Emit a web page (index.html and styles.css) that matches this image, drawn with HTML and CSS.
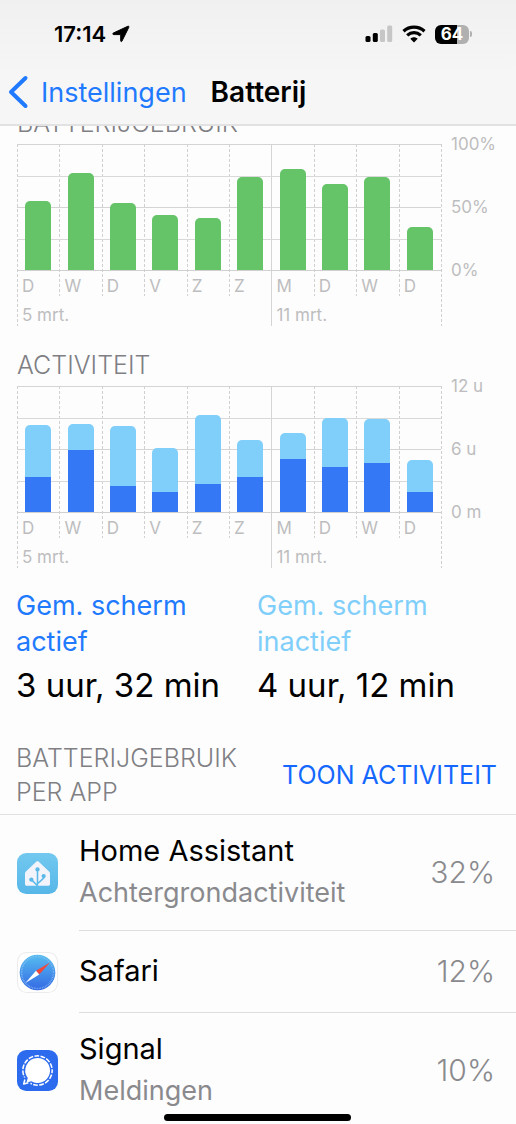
FILE: index.html
```html
<!DOCTYPE html>
<html lang="nl">
<head>
<meta charset="utf-8">
<meta name="viewport" content="width=device-width, initial-scale=1">
<title>Batterij</title>
<link rel="stylesheet" href="styles.css">
</head>
<body>
<header class="top">
  <div class="status">
    <div class="status-left">
      <span class="time">17:14</span>
      <svg class="location" width="18" height="18" viewBox="0 0 18 18" aria-hidden="true"><path d="M1.400 8 15.800 1.300c.8-.4 1.400.2 1 1L10 16c-.4.900-1.300.700-1.300-.3V9.600H1.800c-1.200 0-1.400-1.100-.4-1.600Z" fill="#000" stroke="#000" stroke-width="1"/></svg>
    </div>
    <div class="status-right">
      <svg width="28" height="18" viewBox="0 0 28 18" aria-hidden="true"><rect x="0.500" y="11" width="5" height="6" rx="1.500"/><rect x="7.800" y="8" width="5" height="9" rx="1.500"/><rect x="15" y="4.500" width="5" height="12.500" rx="1.500" fill="#c6c6c6"/><rect x="22.200" y="0.500" width="5" height="16.500" rx="1.500" fill="#c6c6c6"/></svg>
      <svg width="24" height="18" viewBox="0 0 24 18" fill="none" stroke="#000" stroke-width="3.200" aria-hidden="true"><path d="M1.500 6.200c6-5.400 15-5.400 21 0"/><path d="M5.200 10.400c4-3.700 9.600-3.700 13.600 0"/><path d="M8.300 13.800c2.200-2 5.200-2 7.400 0L12 17.400Z" fill="#000" stroke="none"/></svg>
      <div class="battery"><span class="battery-body">64</span><span class="battery-cap"></span></div>
    </div>
  </div>
  <nav class="nav">
    <a class="back" href="#instellingen"><svg width="21" height="34" viewBox="0 0 21 34" fill="none" stroke="#1f7aff" stroke-width="4" stroke-linecap="round" stroke-linejoin="round" aria-hidden="true"><path d="M17.500 3 3 17l14.500 14"/></svg><span>Instellingen</span></a>
    <h1 class="title">Batterij</h1>
  </nav>
</header>
<main class="content">
  <section class="section section-first">
    <h2 class="heading">BATTERIJGEBRUIK</h2>
    <div class="chart">
      <div class="weeks">
        <div class="week week-six">
          <div class="days">
            <div class="day"><div class="track"><div class="bar green" style="height:55%"></div></div><span class="label">D</span></div>
            <div class="day"><div class="track"><div class="bar green" style="height:77%"></div></div><span class="label">W</span></div>
            <div class="day"><div class="track"><div class="bar green" style="height:53%"></div></div><span class="label">D</span></div>
            <div class="day"><div class="track"><div class="bar green" style="height:44%"></div></div><span class="label">V</span></div>
            <div class="day"><div class="track"><div class="bar green" style="height:41%"></div></div><span class="label">Z</span></div>
            <div class="day"><div class="track"><div class="bar green" style="height:74%"></div></div><span class="label">Z</span></div>
          </div>
          <span class="date">5 mrt.</span>
        </div>
        <div class="week week-four">
          <div class="days">
            <div class="day"><div class="track"><div class="bar green" style="height:80%"></div></div><span class="label">M</span></div>
            <div class="day"><div class="track"><div class="bar green" style="height:68%"></div></div><span class="label">D</span></div>
            <div class="day"><div class="track"><div class="bar green" style="height:74%"></div></div><span class="label">W</span></div>
            <div class="day"><div class="track"><div class="bar green" style="height:34%"></div></div><span class="label">D</span></div>
          </div>
          <span class="date">11 mrt.</span>
        </div>
      </div>
      <div class="axis"><span>100%</span><span>50%</span><span>0%</span></div>
    </div>
  </section>

  <section class="section">
    <h2 class="heading">ACTIVITEIT</h2>
    <div class="chart">
      <div class="weeks">
        <div class="week week-six">
          <div class="days">
            <div class="day"><div class="track"><div class="bar sky" style="height:41%"></div><div class="blue" style="height:28%"></div></div><span class="label">D</span></div>
            <div class="day"><div class="track"><div class="bar sky" style="height:21%"></div><div class="blue" style="height:49%"></div></div><span class="label">W</span></div>
            <div class="day"><div class="track"><div class="bar sky" style="height:47%"></div><div class="blue" style="height:21%"></div></div><span class="label">D</span></div>
            <div class="day"><div class="track"><div class="bar sky" style="height:35%"></div><div class="blue" style="height:16%"></div></div><span class="label">V</span></div>
            <div class="day"><div class="track"><div class="bar sky" style="height:55%"></div><div class="blue" style="height:22%"></div></div><span class="label">Z</span></div>
            <div class="day"><div class="track"><div class="bar sky" style="height:29%"></div><div class="blue" style="height:28%"></div></div><span class="label">Z</span></div>
          </div>
          <span class="date">5 mrt.</span>
        </div>
        <div class="week week-four">
          <div class="days">
            <div class="day"><div class="track"><div class="bar sky" style="height:21%"></div><div class="blue" style="height:42%"></div></div><span class="label">M</span></div>
            <div class="day"><div class="track"><div class="bar sky" style="height:39%"></div><div class="blue" style="height:36%"></div></div><span class="label">D</span></div>
            <div class="day"><div class="track"><div class="bar sky" style="height:35%"></div><div class="blue" style="height:39%"></div></div><span class="label">W</span></div>
            <div class="day"><div class="track"><div class="bar sky" style="height:25%"></div><div class="blue" style="height:16%"></div></div><span class="label">D</span></div>
          </div>
          <span class="date">11 mrt.</span>
        </div>
      </div>
      <div class="axis"><span>12 u</span><span>6 u</span><span>0 m</span></div>
    </div>
  </section>

  <dl class="totals">
    <div class="total"><dt class="total-name active">Gem. scherm actief</dt><dd class="total-value">3 uur, 32 min</dd></div>
    <div class="total"><dt class="total-name idle">Gem. scherm inactief</dt><dd class="total-value">4 uur, 12 min</dd></div>
  </dl>

  <div class="apps-head">
    <h2 class="heading apps-title">BATTERIJGEBRUIK PER APP</h2>
    <button class="toggle" type="button">TOON ACTIVITEIT</button>
  </div>
  <ul class="apps">
    <li class="app">
      <svg class="icon" viewBox="0 0 40 40" aria-hidden="true"><defs><linearGradient id="ha" x1="0" y1="0" x2="0" y2="1"><stop offset="0" stop-color="#72c8ef"/><stop offset="1" stop-color="#57b7e8"/></linearGradient></defs><rect width="40" height="40" rx="9" fill="url(#ha)"/><path d="M19 8.400c.6-.6 1.400-.6 2 0l10.300 9.700c.6.600.9 1.300.9 2.100v10c0 1-.8 1.800-1.800 1.800H9.600c-1 0-1.800-.8-1.800-1.800v-10c0-.8.3-1.500.9-2.100Z" fill="#f3f4fb"/><g fill="none" stroke="#5ab9e9" stroke-width="1.500"><path d="M20 16v16M14 26l6 6M26 22.500v2L20 30"/></g><g fill="#5ab9e9"><circle cx="20" cy="16" r="2.100"/><circle cx="14" cy="26" r="2.100"/><circle cx="26" cy="22.500" r="2.100"/></g></svg>
      <div class="app-row"><div class="app-text"><span class="app-name">Home Assistant</span><span class="app-note">Achtergrondactiviteit</span></div><span class="share">32%</span></div>
    </li>
    <li class="app">
      <svg class="icon" viewBox="0 0 40 40" aria-hidden="true"><defs><linearGradient id="sf" x1="0" y1="0" x2="0" y2="1"><stop offset="0" stop-color="#56bdf0"/><stop offset="1" stop-color="#3468e4"/></linearGradient></defs><rect x="0.500" y="0.500" width="39" height="39" rx="9" fill="#fff" stroke="#ececee"/><circle cx="20" cy="20" r="17.400" fill="url(#sf)"/><circle cx="20" cy="20" r="15.600" fill="none" stroke="#8cc3f4" stroke-width="1.600" stroke-dasharray="0.600 1"/><path d="M32.200 10.300 18.500 18.300l3.200 3.600Z" fill="#f0493c"/><path d="M8.200 30.200 18.500 18.300l3.200 3.600Z" fill="#fff"/></svg>
      <div class="app-row"><div class="app-text"><span class="app-name">Safari</span></div><span class="share">12%</span></div>
    </li>
    <li class="app">
      <svg class="icon" viewBox="0 0 40 40" aria-hidden="true"><rect width="40" height="40" rx="9" fill="#2c6bed"/><circle cx="20" cy="20" r="14.300" fill="none" stroke="#fff" stroke-width="1.500" stroke-dasharray="4.600 1.400" stroke-dashoffset="2"/><circle cx="9" cy="31" r="4.500" fill="#2c6bed"/><path d="M20 7.800a12.200 12.200 0 1 1-6 22.800L9.200 31.800l1.300-4.500A12.200 12.200 0 0 1 20 7.800Z" fill="#fff"/><path d="m7.700 28.800-1.200 4.300 4.600-1.100" fill="none" stroke="#fff" stroke-width="1.500" stroke-linejoin="round"/></svg>
      <div class="app-row"><div class="app-text"><span class="app-name">Signal</span><span class="app-note">Meldingen</span></div><span class="share">10%</span></div>
    </li>
  </ul>
</main>
<div class="home-bar"></div>
</body>
</html>
```

FILE: styles.css
```css
* { box-sizing: border-box; }
body {
  margin: 0;
  background: #fdfdfd;
  color: #000;
  font-family: Inter, "Liberation Sans", sans-serif;
}
h1, h2, dl, dd, ul { margin: 0; padding: 0; }

.top {
  position: sticky;
  top: 0;
  z-index: 2;
  height: 126px;
  background: linear-gradient(#f0f0f0, #f6f6f6 60%);
  border-bottom: 2px solid #e2e2e2;
}
.status {
  display: flex;
  justify-content: space-between;
  align-items: center;
  height: 68px;
  padding: 0 44px 0 54px;
}
.status-left, .status-right { display: flex; align-items: center; }
.status-left { gap: 6px; }
.status-right { gap: 9px; }
.time { font-size: 22px; font-weight: 600; }
.battery { display: flex; align-items: center; gap: 1px; }
.battery-body {
  width: 34px;
  border-radius: 6px;
  background: linear-gradient(90deg, #000 64%, #b0b0b0 64%);
  color: #fff;
  font-size: 17px;
  font-weight: 700;
  line-height: 19px;
  text-align: center;
}
.battery-cap { width: 2px; height: 6px; border-radius: 0 2px 2px 0; background: #b0b0b0; }

.nav { display: flex; align-items: center; gap: 24px; height: 48px; padding-left: 8px; }
.back { display: flex; align-items: center; gap: 12px; color: #1f7aff; font-size: 27px; text-decoration: none; }
.title { font-size: 28px; font-weight: 600; }

.section { padding: 0 0 0 17px; margin-bottom: 20px; }
.section-first { margin-top: -18px; margin-bottom: 24px; }
.heading { padding-bottom: 6px; color: #7f7f84; font-size: 25px; font-weight: 300; line-height: 30px; }

.chart { display: flex; }
.weeks {
  display: flex;
  flex: 1;
  padding-right: 1px;
  background:
    repeating-linear-gradient(#d0d0d0 0 3px, transparent 3px 5px) right top / 1px 100% no-repeat;
}
.week {
  background: repeating-linear-gradient(#d0d0d0 0 3px, transparent 3px 5px) left top / 1px 100% no-repeat;
}
.week-six { flex: 6; }
.week-four { flex: 4; background: linear-gradient(#d4d4d4, #d4d4d4) left top / 1px 100% no-repeat; }
.days { display: flex; }
.day { flex: 1; background: repeating-linear-gradient(#d0d0d0 0 3px, transparent 3px 5px) left top / 1px 100% no-repeat; }
.week-four .day:first-child { background: none; }
.track {
  display: flex;
  flex-direction: column;
  justify-content: flex-end;
  align-items: center;
  height: 127px;
  padding-bottom: 1px;
  background:
    linear-gradient(#d4d4d4, #d4d4d4) 0 0 / 100% 1px no-repeat,
    linear-gradient(#d9d9d9, #d9d9d9) 0 25% / 100% 1px no-repeat,
    linear-gradient(#d4d4d4, #d4d4d4) 0 50% / 100% 1px no-repeat,
    linear-gradient(#d9d9d9, #d9d9d9) 0 75% / 100% 1px no-repeat,
    linear-gradient(#d0d0d0, #d0d0d0) 0 100% / 100% 1px no-repeat;
}
.bar { border-radius: 5px 5px 0 0; }
.bar, .blue { width: 26px; }
.green { background: #65c368; }
.sky { background: #80cefa; }
.blue { background: #3478f6; }
.label, .date, .axis { color: #bdbdbf; font-size: 17px; font-weight: 400; }
.label { display: block; padding: 5px 0 0 5px; line-height: 20px; }
.date { display: block; padding: 8px 0 0 5px; line-height: 22px; }
.axis {
  display: flex;
  flex-direction: column;
  justify-content: space-between;
  width: 74px;
  height: 146px;
  margin-top: -10px;
  padding-left: 9px;
  line-height: 20px;
}

.totals { display: grid; grid-template-columns: 1fr 1fr; padding: 0 18px 0 16px; }
.total-name { max-width: 190px; font-size: 27px; line-height: 36px; }
.active { color: #1f7aff; }
.idle { color: #80cefa; }
.total-value { font-size: 33px; line-height: 50px; }

.apps-head {
  display: flex;
  justify-content: space-between;
  align-items: center;
  padding: 31px 19px 5px 16px;
  border-bottom: 1px solid #e2e2e2;
}
.apps-title { flex: 0 1 240px; padding: 0; line-height: 34px; }
.toggle { padding: 0; border: 0; background: none; color: #1468ff; font-family: inherit; font-size: 25px; font-weight: 400; line-height: 34px; }

.apps { list-style: none; }
.app { display: flex; align-items: center; gap: 21px; padding-left: 17px; }
.icon { flex: none; width: 41px; height: 41px; }
.app-row {
  display: flex;
  flex: 1;
  justify-content: space-between;
  align-items: center;
  min-height: 82px;
  padding: 15px 21px 16px 0;
  border-bottom: 1px solid #dedede;
}
.app:last-child .app-row { border-bottom: 0; }
.app-text { display: flex; flex-direction: column; }
.app-name { font-size: 29px; line-height: 42px; }
.app-note { color: #8a8a8e; font-size: 27px; line-height: 42px; }
.share { color: #8a8a8e; font-size: 30px; font-weight: 300; }

.home-bar {
  position: fixed;
  bottom: 3px;
  left: 50%;
  width: 187px;
  height: 7px;
  margin-left: -94px;
  border-radius: 4px;
  background: #000;
}
```
